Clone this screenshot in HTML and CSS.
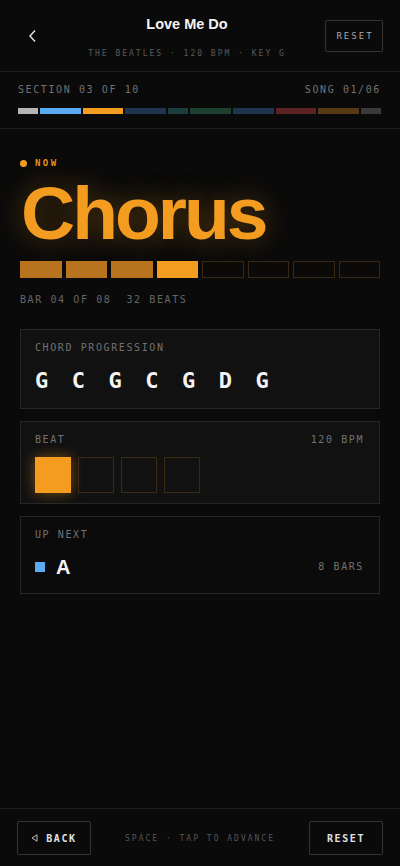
FILE: index.html
```html
<!DOCTYPE html>
<html lang="en">
<head>
    <meta charset="UTF-8">
    <meta name="viewport" content="width=device-width, initial-scale=1.0">
    <title>Love Me Do</title>
    <link rel="stylesheet" href="styles.css">
</head>
<body>
    <div class="app">
        <!-- 顶部 -->
        <header class="top">
            <button class="back-icon" aria-label="Back">
                <svg width="10" height="14" viewBox="0 0 10 14"><path d="M7 1.5 L2 7 L7 12.5" fill="none" stroke="#e6e6e6" stroke-width="1.4"/></svg>
            </button>
            <div class="song">
                <div class="song-title">Love Me Do</div>
                <div class="song-meta">THE BEATLES · 120 BPM · KEY G</div>
            </div>
            <button class="btn-reset-top">RESET</button>
        </header>

        <!-- 段落进度 -->
        <section class="sections">
            <div class="sections-row">
                <span>SECTION 03 OF 10</span>
                <span>SONG 01/06</span>
            </div>
            <div class="segments">
                <div class="seg s1 c-gray"></div>
                <div class="seg s2 c-blue"></div>
                <div class="seg s2 c-orange"></div>
                <div class="seg s2 c-navy"></div>
                <div class="seg s1 c-teal"></div>
                <div class="seg s2 c-green"></div>
                <div class="seg s2 c-navy"></div>
                <div class="seg s2 c-red"></div>
                <div class="seg s2 c-brown"></div>
                <div class="seg s1 c-dark"></div>
            </div>
        </section>

        <main class="main">
            <div class="now"><span class="now-dot"></span>NOW</div>
            <h1 class="current">Chorus</h1>
            <div class="bars">
                <div class="bar done"></div>
                <div class="bar done"></div>
                <div class="bar done"></div>
                <div class="bar active"></div>
                <div class="bar"></div>
                <div class="bar"></div>
                <div class="bar"></div>
                <div class="bar"></div>
            </div>
            <div class="bar-info"><span>BAR 04 OF 08</span><span>32 BEATS</span></div>

            <div class="card card-chords">
                <div class="label">CHORD PROGRESSION</div>
                <div class="chords">
                    <span>G</span><span>C</span><span>G</span><span>C</span><span>G</span><span>D</span><span>G</span>
                </div>
            </div>

            <div class="card card-beat">
                <div class="card-head">
                    <span class="label">BEAT</span>
                    <span class="label">120 BPM</span>
                </div>
                <div class="beats">
                    <div class="beat on"></div>
                    <div class="beat"></div>
                    <div class="beat"></div>
                    <div class="beat"></div>
                </div>
            </div>

            <div class="card card-next">
                <div class="label">UP NEXT</div>
                <div class="next-row">
                    <span class="next-swatch"></span>
                    <span class="next-name">A</span>
                    <span class="label next-bars">8 BARS</span>
                </div>
            </div>
        </main>

        <!-- 底部 -->
        <footer class="bottom">
            <button class="btn">
                <svg width="7" height="8" viewBox="0 0 7 8"><path d="M6 0.8 L1 4 L6 7.2 Z" fill="none" stroke="#bdbdbd" stroke-width="1"/></svg>
                BACK
            </button>
            <span class="hint">SPACE · TAP TO ADVANCE</span>
            <button class="btn">RESET</button>
        </footer>
    </div>
</body>
</html>
```

FILE: styles.css
```css
body {
    margin: 0;
    background-color: #0a0a0a;
    color: #e8e8e8;
    font-family: 'Liberation Sans', Arial, sans-serif;
}
button {
    font-family: inherit;
    background: none;
    cursor: pointer;
    padding: 0;
}
.app {
    min-height: 100vh;
    display: flex;
    flex-direction: column;
}

/* 顶部 */
.top {
    height: 72px;
    box-sizing: border-box;
    padding: 0 17px;
    display: grid;
    grid-template-columns: 32px 1fr 58px;
    align-items: center;
    border-bottom: 1px solid #1e1e1e;
}
.back-icon {
    border: none;
    width: 32px;
    height: 14px;
    margin-top: 1px;
    display: flex;
    justify-content: center;
}
.song {
    text-align: center;
}
.song-title {
    font-size: 14.5px;
    font-weight: bold;
    line-height: 18px;
    color: #f4f4f4;
    padding-top: 2px;
    margin-bottom: 16px;
}
.song-meta {
    font-family: 'DejaVu Sans Mono', monospace;
    font-size: 8px;
    line-height: 10px;
    letter-spacing: 2px;
    color: #5a5a5a;
}
.btn-reset-top {
    width: 58px;
    height: 32px;
    border: 1px solid #333;
    border-radius: 2px;
    color: #a8a8a8;
    font-family: 'DejaVu Sans Mono', monospace;
    font-size: 9px;
    letter-spacing: 2px;
    padding-left: 2px;
}

/* 段落进度 */
.sections {
    padding: 13px 19px 14px 18px;
    border-bottom: 1px solid #1c1c1c;
}
.sections-row {
    display: flex;
    justify-content: space-between;
    font-family: 'DejaVu Sans Mono', monospace;
    font-size: 10px;
    line-height: 10px;
    letter-spacing: 1.6px;
    color: #727272;
}
.segments {
    display: flex;
    gap: 2px;
    margin-top: 13px;
    height: 6px;
}
.seg { height: 6px; }
.s1 { flex: 1; }
.s2 { flex: 2; }
.c-gray { background-color: #b4b4b4; }
.c-blue { background-color: #58abf2; }
.c-orange { background-color: #f39c20; }
.c-navy { background-color: #1f344d; }
.c-teal { background-color: #1b3f3e; }
.c-green { background-color: #1e4030; }
.c-red { background-color: #5a2222; }
.c-brown { background-color: #573914; }
.c-dark { background-color: #3a3a3a; }

/* 当前段落 */
.main {
    flex: 1;
    padding: 29px 20px 0 20px;
}
.now {
    display: flex;
    align-items: center;
    gap: 8px;
    font-family: 'DejaVu Sans Mono', monospace;
    font-weight: bold;
    font-size: 9px;
    line-height: 10px;
    letter-spacing: 2.4px;
    color: #e8921c;
}
.now-dot {
    width: 7px;
    height: 7px;
    border-radius: 50%;
    background-color: #f39c20;
}
.current {
    margin: 8px 0 0 1px;
    font-size: 75px;
    line-height: 75px;
    font-weight: bold;
    letter-spacing: -3px;
    color: #f39c20;
    text-shadow: 0 0 28px rgba(243, 156, 32, 0.35);
}
.bars {
    display: grid;
    grid-template-columns: repeat(8, 1fr);
    gap: 4px;
    margin-top: 10px;
}
.bar {
    height: 17px;
    box-sizing: border-box;
    border: 1px solid #3a2912;
    background-color: #0c0a08;
}
.bar.done {
    background-color: #b8731f;
    border-color: #b8731f;
}
.bar.active {
    background-color: #f39c20;
    border-color: #f39c20;
}
.bar-info {
    margin-top: 16px;
    display: flex;
    gap: 15px;
    font-family: 'DejaVu Sans Mono', monospace;
    font-size: 10px;
    line-height: 12px;
    letter-spacing: 1.6px;
    color: #666;
}

/* 卡片 */
.card {
    border: 1px solid #262626;
    background-color: #111;
    padding: 13px 15px 16px 14px;
    margin-top: 12px;
}
.card-chords { margin-top: 23px; }
.label {
    font-family: 'DejaVu Sans Mono', monospace;
    font-size: 10px;
    line-height: 10px;
    letter-spacing: 1.6px;
    color: #727272;
}
.chords {
    display: flex;
    gap: 23.5px;
    margin-top: 17px;
    font-family: 'DejaVu Sans Mono', monospace;
    font-weight: bold;
    font-size: 22px;
    line-height: 22px;
    color: #f4f4f4;
}
.card-head {
    display: flex;
    justify-content: space-between;
}
.beats {
    display: flex;
    gap: 7px;
    margin-top: 12px;
}
.card-beat { padding-bottom: 10px; }
.beat {
    width: 36px;
    height: 36px;
    box-sizing: border-box;
    border: 1px solid #3a2a14;
}
.beat.on {
    background-color: #f39c20;
    border-color: #f39c20;
    box-shadow: 0 0 14px rgba(243, 156, 32, 0.45);
}
.card-next {
    background-color: #0b0b0b;
}
.next-row {
    display: flex;
    align-items: center;
    margin-top: 17px;
    height: 20px;
}
.next-swatch {
    width: 10px;
    height: 10px;
    background-color: #5aabf0;
    margin-right: 11px;
}
.next-name {
    font-size: 20px;
    font-weight: bold;
    color: #f4f4f4;
    flex: 1;
}

/* 底部 */
.bottom {
    border-top: 1px solid #1f1f1f;
    padding: 12px 17px 11px 17px;
    display: flex;
    justify-content: space-between;
    align-items: center;
}
.btn {
    width: 74px;
    height: 34px;
    border: 1px solid #333;
    border-radius: 2px;
    color: #e0e0e0;
    font-family: 'DejaVu Sans Mono', monospace;
    font-weight: bold;
    font-size: 10px;
    letter-spacing: 1.6px;
    display: flex;
    align-items: center;
    justify-content: center;
    gap: 8px;
}
.hint {
    font-family: 'DejaVu Sans Mono', monospace;
    font-size: 8px;
    letter-spacing: 2px;
    color: #555;
}
```
